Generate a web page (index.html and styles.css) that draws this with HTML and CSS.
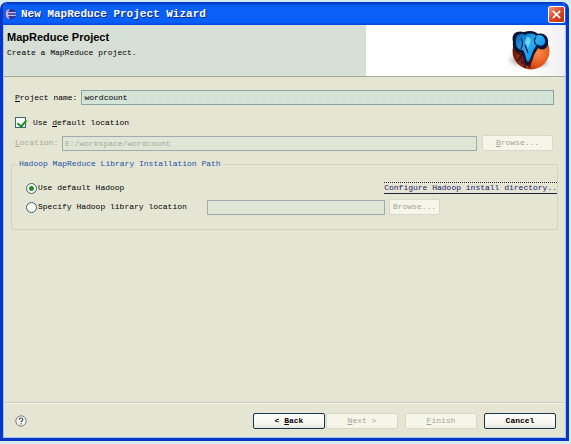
FILE: index.html
```html
<!DOCTYPE html>
<html lang="en">
<head>
<meta charset="utf-8">
<title>New MapReduce Project Wizard</title>
<link rel="stylesheet" href="styles.css">
</head>
<body>
<main class="window">
  <header class="titlebar">
    <svg class="app-icon" viewBox="0 0 12 12" aria-hidden="true">
      <circle cx="6" cy="6" r="5.300" fill="#34349c"/>
      <path d="M5 .8a5.300 5.300 0 0 0 0 10.400C2.500 8 2.500 4 5 .8z" fill="#e0b0b0"/>
      <path d="M3.200 4.700h7.800M3 7.300h8" stroke="#d8dcff" stroke-width="1"/>
    </svg>
    <h1 class="title">New MapReduce Project Wizard</h1>
    <button class="close" type="button" aria-label="Close">
      <svg viewBox="0 0 14 14" aria-hidden="true"><path d="M3 3l8 8M11 3l-8 8" stroke="#fff" stroke-width="1.8"/></svg>
    </button>
  </header>
  <section class="banner">
    <div class="banner-text">
      <h2 class="heading">MapReduce Project</h2>
      <p class="description">Create a MapReduce project.</p>
    </div>
    <div class="banner-art">
      <svg class="logo" viewBox="0 0 50 44" aria-hidden="true">
        <defs>
          <radialGradient id="ball" cx=".7" cy=".55" r=".65"><stop offset="0" stop-color="#ff8a48"/><stop offset=".6" stop-color="#dc4c14"/><stop offset="1" stop-color="#6c1a08"/></radialGradient>
          <radialGradient id="shade"><stop offset="0" stop-color="#888"/><stop offset="1" stop-color="#fff" stop-opacity="0"/></radialGradient>
          <linearGradient id="skin" x2="1" y2="1"><stop offset="0" stop-color="#0a60b0"/><stop offset=".45" stop-color="#28b0f4"/><stop offset="1" stop-color="#0870d0"/></linearGradient>
        </defs>
        <ellipse cx="14" cy="31" rx="14" ry="10" fill="url(#shade)"/>
        <ellipse cx="37" cy="34" rx="12" ry="7" fill="url(#shade)"/>
        <circle cx="27" cy="22" r="18.5" fill="url(#ball)"/>
        <path d="M9 13C7 5 12 1 20 3c6-2 11-1 14 2 6-2 11 3 10 9 0 6-6 8-10 5-2 4-4 6-5 10-1 5-4 8-6 8-4-2-3-8-6-13-6 0-9-5-8-11z" fill="#08163c"/>
        <path d="M12 11c0-6 6-7 9-5 4-2 9-2 11 1 3-2 8-1 9 4 1 6-5 7-8 4-2 4-4 6-5 10-1 4-3 7-4 8-3-3-2-8-5-12-5 0-8-4-7-10z" fill="url(#skin)"/>
        <path d="M17 9c2 3 2 7 0 11M32 8c-2 2-2 5 0 8M21 16l3 8" fill="none" stroke="#08204c" stroke-width="1.300"/>
        <path d="M23 8c3 0 5 2 3 6l-2 5-3-6z" fill="#6cd4f8"/>
        <path d="M12 23l5 3-3 6M17 26l1 9M27 31l-2 8M20 31l1 8" fill="none" stroke="#4a1014" stroke-width="2"/>
      </svg>
    </div>
  </section>
  <form class="content">
    <div class="row project">
      <label for="name"><u>P</u>roject name:</label>
      <input class="field active" id="name" type="text" value="wordcount">
    </div>
    <div class="row default">
      <input class="check" id="default-location" type="checkbox" checked>
      <label for="default-location">Use <u>d</u>efault location</label>
    </div>
    <div class="row location disabled">
      <label for="location"><u>L</u>ocation:</label>
      <input class="field" id="location" type="text" value="E:/workspace/wordcount" disabled>
      <button class="button" type="button" disabled><u>B</u>rowse...</button>
    </div>
    <fieldset class="group">
      <legend>Hadoop MapReduce Library Installation Path</legend>
      <div class="row option">
        <input class="radio" id="use-default" type="radio" name="hadoop" checked>
        <label for="use-default">Use default Hadoop</label>
        <a class="configure" href="#">Configure Hadoop install directory..</a>
      </div>
      <div class="row option">
        <input class="radio" id="specify" type="radio" name="hadoop">
        <label class="specify-label" for="specify">Specify Hadoop library location</label>
        <input class="field library" type="text" aria-label="Hadoop library location" disabled>
        <button class="button small" type="button" disabled>Browse...</button>
      </div>
    </fieldset>
  </form>
  <footer class="footer">
    <button class="help" type="button" aria-label="Help">
      <svg viewBox="0 0 12 12" aria-hidden="true"><circle cx="6" cy="6" r="5.2" fill="#f4f4ec" stroke="#667080" stroke-width=".9"/><path d="M4.3 4.7c0-2.3 3.5-2.2 3.5-.2C7.800 5.800 6 5.700 6 7.300M6 8.300v1.200" fill="none" stroke="#465060" stroke-width="1.200"/></svg>
    </button>
    <div class="pair">
      <button class="button" type="button">&lt; <u>B</u>ack</button>
      <button class="button" type="button" disabled><u>N</u>ext &gt;</button>
    </div>
    <button class="button" type="button" disabled><u>F</u>inish</button>
    <button class="button" type="button">Cancel</button>
  </footer>
</main>
</body>
</html>
```
FILE: styles.css
```css
* {
  box-sizing: border-box;
}

body {
  margin: 0;
  min-height: 100vh;
  display: flex;
  padding: 2px 2px 3px 0;
  background: #d4eef0;
}

body,
button,
input {
  font-family: "Liberation Mono", monospace;
  font-size: 8px;
  line-height: 10px;
  color: #000;
}

h1,
h2,
p {
  margin: 0;
}

.window {
  flex: 1;
  display: flex;
  flex-direction: column;
  border: 3px solid #0a34c4;
  border-top-width: 1px;
  border-radius: 7px 7px 0 0;
  background: #e5e5d3;
  box-shadow: inset 1px 0 #9cc8f4, inset -1px -1px #9cc8f4;
  overflow: hidden;
}

.titlebar {
  display: flex;
  align-items: center;
  height: 22px;
  padding: 0 1px 0 2px;
  background: linear-gradient(#0640c8, #0a60f8 3px, #0860fa 19px, #0648d8);
}

.app-icon {
  width: 12px;
  height: 12px;
  margin-right: 4px;
}

.title {
  flex: 1;
  font-size: 11px;
  line-height: 16px;
  color: #fff;
  text-shadow: 1px 1px #082890;
}

.close {
  width: 17px;
  height: 17px;
  padding: 1px;
  border: 1px solid #fff;
  border-radius: 2px;
  background: linear-gradient(135deg, #f09880, #dc4828 50%, #b83010);
}

svg {
  display: block;
}

.banner {
  display: flex;
  height: 52px;
  margin: 0 1px;
  border-bottom: 1px solid #a5a995;
}

.banner-text {
  flex: 0 0 64.5%;
  padding: 5px 3px;
  background: repeating-conic-gradient(#d4ddd2 0 25%, #dae1d8 0 50%) 0 0 / 4px 4px;
}

.heading {
  font-family: "Liberation Sans", sans-serif;
  font-size: 11px;
  line-height: 14px;
}

.description {
  margin-top: 3px;
  line-height: 12px;
}

.banner-art {
  flex: 1;
  display: flex;
  justify-content: flex-end;
  padding: 4px 11px 0 0;
  background: linear-gradient(90deg, #fff 80%, #f0f0f0);
}

.logo {
  width: 50px;
  height: 44px;
}

.content {
  flex: 1;
  padding: 13px 8px 0;
}

.row {
  display: flex;
  align-items: center;
}

.project {
  gap: 4px;
  padding: 0 4px;
}

.field {
  flex: 1;
  min-width: 0;
  height: 15px;
  padding: 0 2px;
  border: 1px solid #8aa4a4;
  border-radius: 0;
  background: #e0e6d6;
}

.field.active {
  background: repeating-conic-gradient(#d0e2d4 0 25%, #d9e6da 0 50%) 0 0 / 4px 4px;
}

.field:disabled {
  color: #a5a899;
  border-color: #a3aaae;
}

.default {
  gap: 7px;
  margin-top: 12px;
  padding-left: 4px;
}

.check,
.radio {
  appearance: none;
  flex: none;
  width: 11px;
  height: 11px;
  margin: 0;
  border: 1px solid #3c6478;
  background: #f8faf2;
}

.check {
  position: relative;
}

.check:checked::after {
  content: "";
  position: absolute;
  left: 3px;
  top: 0;
  width: 4px;
  height: 7px;
  border: solid #229028;
  border-width: 0 2px 2px 0;
  transform: rotate(40deg);
}

.location {
  gap: 5px;
  margin-top: 7px;
  padding: 0 5px 0 4px;
}

.location label {
  width: 42px;
}

.disabled {
  color: #a5a899;
}

.button {
  flex: none;
  width: 72px;
  height: 16px;
  padding: 0;
  border: 1px solid #183850;
  border-radius: 2px;
  background: linear-gradient(#fff, #f6f6ee 70%, #e4e4dc);
  font-weight: bold;
}

.button:disabled {
  border-color: #d8d8c6;
  background: #f5f5e9;
  color: #a2a294;
  font-weight: normal;
}

.location .button {
  width: 71px;
}

.group {
  min-width: 0;
  margin: 8px 0 0;
  padding: 11px 0 14px 14px;
  border: 1px solid #d0d2c2;
  border-radius: 2px;
}

.group legend {
  margin-left: -9px;
  padding: 0 2px;
  color: #2454a4;
}

.option {
  height: 16px;
  gap: 1px;
}

.option + .option {
  margin-top: 3px;
}

.radio {
  border-radius: 50%;
}

.radio:checked {
  background: radial-gradient(#229038 0 2px, #f8faf2 3px);
}

.configure {
  margin-left: auto;
  white-space: nowrap;
  border-top: 1px dotted #202040;
  border-bottom: 1px solid #202040;
  color: #202070;
  text-decoration: none;
}

.specify-label {
  flex: 0 0 168px;
}

.library {
  flex: 0 0 178px;
}

.button.small {
  width: 51px;
  margin-left: 3px;
}

.footer {
  display: flex;
  align-items: center;
  gap: 7px;
  margin: 0 1px;
  padding: 10px 9px 9px 11px;
  border-top: 1px solid #c8ccc4;
  box-shadow: inset 0 1px #f6f6ec;
}

.help {
  width: 12px;
  height: 12px;
  margin-right: auto;
  padding: 0;
  border: 0;
  background: none;
}

.pair {
  display: flex;
  gap: 1px;
}
```
